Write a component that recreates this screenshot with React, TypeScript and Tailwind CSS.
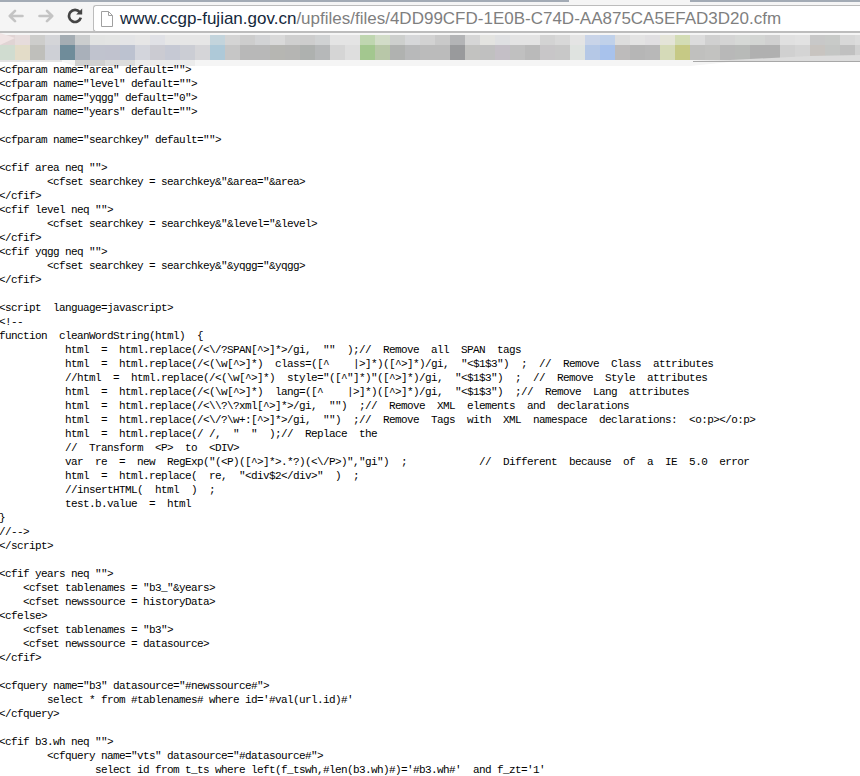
import React from 'react';

const topRow = ['#e0d4d4','#e6dcdc','#cdcdcb','#d4d5d8','#a4adb3','#cbcdce','#e2e3e2','#e3e4e3','#e3e4e6','#e6e6e6','#e0e1e6','#e6e6e6','#e6e6e6','#e6e6e6','#c3d4dc','#d4d4d4','#cdcdcd','#d2d3d5','#d9d9d9','#cfcfcf','#cdcdcd','#d0d2d3','#e4e4e4','#e4e4e4','#bfd6b0','#d2dcc8','#cdcfcd','#d6d7d9','#d2d2d2','#c9c9c9','#b3b4b6','#d6d6d6','#e3e3e0','#dfe0e2','#e3e3e3','#e3e3e3','#d3d3d3','#d8d8d8','#e4e4e4','#c9d4e8','#c0d1ea','#dddddd','#e3e3e3','#e0dfe1','#e4e4d8','#d3dcb5','#dcdcdc','#d0d0d0','#d4d4d4','#d6d8d6','#d3d5d3','#d0d0d0','#e0e0e0','#e2e2e2','#c8c8c8','#c8cac8','#d8d8d8','#dcdcdc'];
const bottomRow = ['#d0dcd0','#e3dcc8','#bfbfbb','#ced0d6','#6f8c9a','#a9b0ba','#c0c3ce','#c0c2ce','#bcc2d0','#d3d5dc','#cbcbd2','#c6c9d4','#cbcdd4','#d5d5d8','#aec9d8','#c6c6c6','#b8b8b8','#b8b8b8','#b6b6b2','#b5b5b3','#aeb1af','#b6b8b9','#d5d5d5','#dedede','#a3c78f','#b8c7a8','#b0b2b0','#b8b9ba','#bbbbbb','#bbbbbb','#999a9c','#c2c2c0','#c0c0c0','#c4bfc6','#c0c0c0','#bababa','#c8c6c8','#c8c8c8','#dfe3e0','#b5c8e6','#a8c2ec','#bdbbbb','#b6b6b6','#b8b8b8','#d5dab8','#c6c985','#c0c0be','#c2c2c0','#b8b8b8','#b8bab8','#b0b0b0','#b0b0b0','#d0d0d0','#d4d4d4','#c8c4c0','#c4c6c4','#c0c0c0','#d0d0d0'];

const sourceLines = [
  '<cfparam name="area" default="">',
  '<cfparam name="level" default="">',
  '<cfparam name="yqgg" default="0">',
  '<cfparam name="years" default="">',
  '',
  '<cfparam name="searchkey" default="">',
  '',
  '<cfif area neq "">',
  '        <cfset searchkey = searchkey&"&area="&area>',
  '</cfif>',
  '<cfif level neq "">',
  '        <cfset searchkey = searchkey&"&level="&level>',
  '</cfif>',
  '<cfif yqgg neq "">',
  '        <cfset searchkey = searchkey&"&yqgg="&yqgg>',
  '</cfif>',
  '',
  '<script  language=javascript>',
  '<!--',
  'function  cleanWordString(html)  {',
  '           html  =  html.replace(/<\\/?SPAN[^>]*>/gi,  ""  );//  Remove  all  SPAN  tags',
  '           html  =  html.replace(/<(\\w[^>]*)  class=([^    |>]*)([^>]*)/gi,  "<$1$3")  ;  //  Remove  Class  attributes',
  '           //html  =  html.replace(/<(\\w[^>]*)  style="([^"]*)"([^>]*)/gi,  "<$1$3")  ;  //  Remove  Style  attributes',
  '           html  =  html.replace(/<(\\w[^>]*)  lang=([^    |>]*)([^>]*)/gi,  "<$1$3")  ;//  Remove  Lang  attributes',
  '           html  =  html.replace(/<\\\\?\\?xml[^>]*>/gi,  "")  ;//  Remove  XML  elements  and  declarations',
  '           html  =  html.replace(/<\\/?\\w+:[^>]*>/gi,  "")  ;//  Remove  Tags  with  XML  namespace  declarations:  <o:p></o:p>',
  '           html  =  html.replace(/ /,  "  "  );//  Replace  the',
  '           //  Transform  <P>  to  <DIV>',
  '           var  re  =  new  RegExp("(<P)([^>]*>.*?)(<\\/P>)","gi")  ;            //  Different  because  of  a  IE  5.0  error',
  '           html  =  html.replace(  re,  "<div$2</div>"  )  ;',
  '           //insertHTML(  html  )  ;',
  '           test.b.value  =  html',
  '}',
  '//-->',
  '</script>',
  '',
  '<cfif years neq "">',
  '    <cfset tablenames = "b3_"&years>',
  '    <cfset newssource = historyData>',
  '<cfelse>',
  '    <cfset tablenames = "b3">',
  '    <cfset newssource = datasource>',
  '</cfif>',
  '',
  '<cfquery name="b3" datasource="#newssource#">',
  '        select * from #tablenames# where id=\'#val(url.id)#\'',
  '</cfquery>',
  '',
  '<cfif b3.wh neq "">',
  '        <cfquery name="vts" datasource="#datasource#">',
  '                select id from t_ts where left(f_tswh,#len(b3.wh)#)=\'#b3.wh#\'  and f_zt=\'1\'',
];

// pixelated bookmarks bar, it is a blurred picture in the original
const BlurredBookmarks = () => (
  <svg width="860" height="33" viewBox="0 33 860 33" className="block">
    <polygon points="0,33 860,33 860,61 730,62 690,66 75,66 60,61 0,60" fill="#f5f5f5" />
    {topRow.map((c, i) => (
      <rect key={i} x={i * 15} y="35" width="15" height="10" fill={c} />
    ))}
    {bottomRow.map((c, i) => (
      <rect key={i} x={i * 15} y="45" width="15" height="15" fill={c} />
    ))}
    <polygon points="693,61 860,61 860,55 810,56 730,60" fill="#dcdcdc" />
    <rect x="693" y="61" width="167" height="1" fill="#a8a8a8" />
    <polygon points="0,33 0,45 15,38" fill="#f0e4e4" />
    <polygon points="0,60 62,60 62,62 0,62" fill="#e4e4e4" />
    <rect x="75" y="60" width="30" height="6" fill="#d0d0d0" />
    <rect x="105" y="60" width="30" height="6" fill="#dcdcdc" />
    <rect x="135" y="60" width="60" height="6" fill="#ececec" />
  </svg>
);

export default function App() {
  return (
    <div className="w-[860px] h-[776px] overflow-hidden bg-white">
      <div className="relative h-[33px] bg-[#f5f5f5] border-b-2 border-[#bdbdbd] flex items-center">
        <div className="absolute top-0 left-0 w-[569px] h-[2px] bg-[#a3abb5]" />
        <div className="absolute top-0 left-[690px] w-[170px] h-[2px] bg-[#a3abb5]" />
        <svg width="16" height="14" viewBox="0 0 16 14" className="ml-[8px] shrink-0" fill="none" stroke="#c4c4c4" strokeWidth="2.6" strokeLinecap="round" strokeLinejoin="round">
          <path d="M14.5 7H2M7 1.8 1.8 7 7 12.2" />
        </svg>
        <svg width="16" height="14" viewBox="0 0 16 14" className="ml-[14px] shrink-0" fill="none" stroke="#c4c4c4" strokeWidth="2.6" strokeLinecap="round" strokeLinejoin="round">
          <path d="M1.5 7H14M9 1.8 14.2 7 9 12.2" />
        </svg>
        <svg width="16" height="16" viewBox="0 0 16 16" className="ml-[13px] shrink-0" fill="none">
          <path d="M12.7 4.2A6 6 0 1 0 13.8 9.6" stroke="#444444" strokeWidth="2.7" />
          <path d="M9.2 6.4h6V0.6z" fill="#444444" />
        </svg>
        <div className="ml-[10px] mt-[6px] flex-1 h-[27px] bg-white border border-r-0 border-[#bcbcbc] rounded-l-[3px] flex items-center">
          <svg width="12" height="16" viewBox="0 0 12 16" className="ml-[7px] shrink-0" fill="#ffffff" stroke="#a0a0a0">
            <path d="M.5.5h7l4 4v11H.5zM7.5.5v4h4" />
          </svg>
          <div className="ml-[7px] whitespace-nowrap text-[17px] leading-none font-['Liberation_Sans',Arial,sans-serif] text-[#7f7f7f]">
            <span className="text-[#14283c]">www.ccgp-fujian.gov.cn</span>/upfiles/files/4DD99CFD-1E0B-C74D-AA875CA5EFAD3D20.cfm
          </div>
        </div>
      </div>
      <BlurredBookmarks />
      <pre className="relative -mt-[3px] m-0 font-['Liberation_Mono','Courier_New',monospace] text-[11px] leading-[14px] tracking-[-0.6px] text-black whitespace-pre">
        {sourceLines.map((line, i) => (
          <div key={i} className="h-[14px] -ml-[1px]">{line}</div>
        ))}
      </pre>
    </div>
  );
}
